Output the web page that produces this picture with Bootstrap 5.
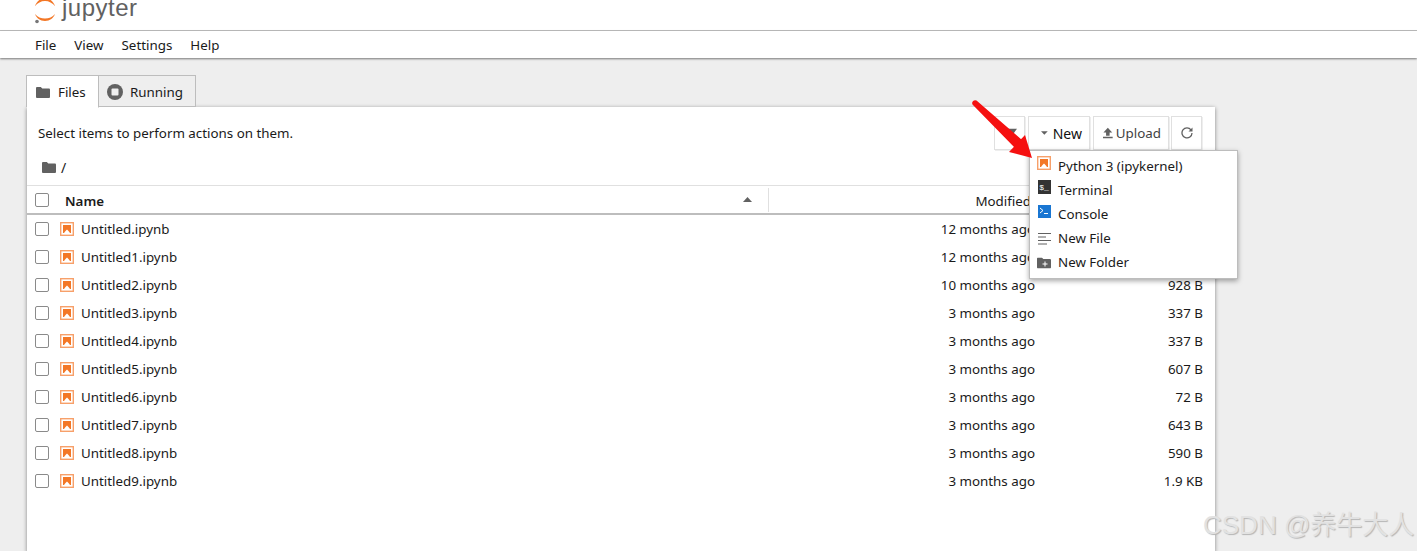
<!DOCTYPE html>
<html lang="en">
<head>
<meta charset="utf-8">
<title>Jupyter</title>
<link href="https://cdn.jsdelivr.net/npm/bootstrap@5.3.0/dist/css/bootstrap.min.css" rel="stylesheet">
<style>
html,body{height:551px;overflow:hidden}
body{background:#eee;font-family:"Noto Sans","Open Sans",sans-serif;font-size:13.35px;color:#1a1a1a;position:relative}
.top-bar{height:31px;background:#fff;border-bottom:1px solid #bdbdbd;overflow:hidden;padding-left:33px}
.top-bar svg{display:block;flex:none}
.logo-word{font-size:24px;color:#616161;line-height:24px;font-family:"Liberation Sans",sans-serif;letter-spacing:.5px;margin:-4px 0 0 5px}
.menu-bar{height:27px;background:#fff;box-shadow:0 1px 2px rgba(0,0,0,.5);padding-left:35px;gap:18px;position:relative;padding-top:2px}
.work{padding:17px 0 0 26px;width:1190px}
.tabs-row{height:32px}
.tab-item{height:32px;border:1px solid #bdbdbd;background:#eee;padding:0 12px 0 8px;gap:7px;margin-right:-1px;padding-top:2px}
.tab-item.active-tab{background:#fff;border-bottom-color:#fff;position:relative;z-index:2;height:33px;width:73px;padding-left:9px;gap:8px}
.panel{background:#fff;height:445px;margin-left:1px;width:1188px;box-shadow:0 1px 4px rgba(0,0,0,.45)}
.tool-row{height:46px;padding:9px 13px 0 11px}
.tool-btn{height:34px;border:1px solid #e0e0e0;box-shadow:1px 1px 0 #eee;background:#fff;padding:0 7px;font-size:14px;color:#424242}
.crumb-row{height:28px;padding-left:15px;gap:5px;margin-bottom:4px;font-size:14px}
.head-row{height:30px;border-top:1px solid #e0e0e0;border-bottom:2px solid #bdbdbd;padding-left:8px}
.head-name{font-weight:600;margin-left:16px;width:703px;padding-top:3px}
.cell-sep{border-left:1px solid #e0e0e0;height:24px}
.file-row{height:28px;padding-left:8px}
.chk{width:14px;height:14px;border:1px solid #8a8a8a;border-radius:2px;background:#fff;flex:none}
.file-ico{margin-left:11px;margin-right:7px;flex:none}
.file-name{width:300px;flex:none}
.col-head-mod{width:262px;text-align:right;flex:none;padding-top:3px}
.file-mod-wrap{width:654px;text-align:right;flex:none}
.file-size{width:168px;text-align:right;flex:none}
.new-menu{position:absolute;left:1029px;top:150px;width:209px;height:129px;background:#fff;border:1px solid #bdbdbd;box-shadow:0 2px 5px rgba(0,0,0,.35);padding-top:3px;z-index:5}
.new-item{height:24px;padding-left:8px}
.new-item svg{flex:none}
.new-item span{margin-left:7px}
.red-arrow{position:absolute;left:968px;top:98px;z-index:6}
.mark-text{position:absolute;left:1203px;top:507px;font-family:"Liberation Sans","Noto Sans CJK SC",sans-serif;font-size:26px;line-height:36px;color:#e2e2e2;text-shadow:1px 1px 1px #b5b5b5;white-space:nowrap;z-index:7}
</style>
</head>
<body>
<svg width="0" height="0" class="d-block position-absolute">
  <symbol id="nb" viewBox="0 0 14 14"><rect x=".7" y=".7" width="12.600" height="12.600" fill="#fff" stroke="#f7a06a" stroke-width="1.400"/><path d="M3 3h8v8h-1L8.500 9 7 7.500 5.500 9 4 11H3z" fill="#f37726"/></symbol>
  <symbol id="fold" viewBox="0 0 14 11"><path d="M0 1.200C0 .5.500 0 1.200 0h3.600l1.500 1.500h6.500c.7 0 1.200.5 1.200 1.200v7c0 .7-.5 1.300-1.200 1.300H1.200C.5 11 0 10.400 0 9.700z" fill="#616161"/></symbol>
</svg>
<div class="top-bar d-flex align-items-start">
  <svg width="24" height="30" viewBox="33 0 24 30"><path d="M35 6C36.500 2 40-2 45-2s8.500 4 10 8C52.500 3 49 1 45 1S37.500 3 35 6z" fill="#f37726"/><path d="M35 14c2.500 3 6 4.500 10 4.500s7.500-1.500 10-4.500c-1.500 4-5 7-10 7s-8.500-3-10-7z" fill="#f37726"/><circle cx="37" cy="21.500" r="1.800" fill="#767677"/></svg>
  <span class="logo-word">jupyter</span>
</div>
<div class="menu-bar d-flex align-items-center"><span>File</span><span>View</span><span>Settings</span><span>Help</span></div>
<div class="work">
  <div class="tabs-row d-flex align-items-start">
    <div class="tab-item active-tab d-flex align-items-center">
      <svg width="14" height="11"><use href="#fold"/></svg>
      <span>Files</span>
    </div>
    <div class="tab-item d-flex align-items-center">
      <svg width="16" height="16" viewBox="0 0 16 16"><circle cx="8" cy="8" r="8" fill="#616161"/><rect x="4.500" y="4.500" width="7" height="7" rx="1" fill="#eee"/></svg>
      <span>Running</span>
    </div>
  </div>
  <div class="panel">
    <div class="tool-row d-flex align-items-start">
      <span class="me-auto" style="margin-top:7px">Select items to perform actions on them.</span>
      <div class="tool-btn d-flex align-items-center" style="width:31px;margin-right:3px"><svg width="16" height="11" viewBox="0 0 16 11" style="margin-left:1px"><path d="M0 0h16l-8 11z" fill="#616161"/></svg></div>
      <div class="tool-btn d-flex align-items-center" style="width:62px;margin-right:3px;padding-left:12px;color:#111"><svg width="8" height="4" viewBox="0 0 8 4"><path d="M0 0h8L4 4z" fill="#616161"/></svg><span style="margin-left:5px">New</span></div>
      <div class="tool-btn d-flex align-items-center" style="width:76px;margin-right:2px;padding-left:9px"><svg width="11" height="12" viewBox="0 0 11 12"><path d="M5.500 0L10.500 5.500H7.500V9h-4V5.500H.5zM0 10.300h11V12H0z" fill="#616161"/></svg><span style="margin-left:3px;font-size:13.4px">Upload</span></div>
      <div class="tool-btn d-flex align-items-center justify-content-center" style="width:31px"><svg width="12" height="12" viewBox="0 0 12 12"><path d="M10 2.900A5 5 0 1 0 11 6" fill="none" stroke="#616161" stroke-width="1.300"/><path d="M11.500 .6v4h-4z" fill="#616161"/></svg></div>
    </div>
    <div class="crumb-row d-flex align-items-center">
      <svg width="14" height="11"><use href="#fold"/></svg><span>/</span>
    </div>
    <div class="head-row d-flex align-items-center">
      <span class="chk"></span>
      <span class="head-name d-flex align-items-center justify-content-between">Name<svg width="9" height="5" viewBox="0 0 9 5" style="margin-right:16px;margin-top:-3px"><path d="M0 5h9L4.500 0z" fill="#616161"/></svg></span>
      <span class="cell-sep"></span>
      <span class="col-head-mod">Modified</span>
    </div>
    <div class="file-row d-flex align-items-center"><span class="chk"></span><svg class="file-ico" width="14" height="14"><use href="#nb"/></svg><span class="file-name">Untitled.ipynb</span><span class="file-mod-wrap">12 months ago</span><span class="file-size">&nbsp;</span></div>
    <div class="file-row d-flex align-items-center"><span class="chk"></span><svg class="file-ico" width="14" height="14"><use href="#nb"/></svg><span class="file-name">Untitled1.ipynb</span><span class="file-mod-wrap">12 months ago</span><span class="file-size">&nbsp;</span></div>
    <div class="file-row d-flex align-items-center"><span class="chk"></span><svg class="file-ico" width="14" height="14"><use href="#nb"/></svg><span class="file-name">Untitled2.ipynb</span><span class="file-mod-wrap">10 months ago</span><span class="file-size">928 B</span></div>
    <div class="file-row d-flex align-items-center"><span class="chk"></span><svg class="file-ico" width="14" height="14"><use href="#nb"/></svg><span class="file-name">Untitled3.ipynb</span><span class="file-mod-wrap">3 months ago</span><span class="file-size">337 B</span></div>
    <div class="file-row d-flex align-items-center"><span class="chk"></span><svg class="file-ico" width="14" height="14"><use href="#nb"/></svg><span class="file-name">Untitled4.ipynb</span><span class="file-mod-wrap">3 months ago</span><span class="file-size">337 B</span></div>
    <div class="file-row d-flex align-items-center"><span class="chk"></span><svg class="file-ico" width="14" height="14"><use href="#nb"/></svg><span class="file-name">Untitled5.ipynb</span><span class="file-mod-wrap">3 months ago</span><span class="file-size">607 B</span></div>
    <div class="file-row d-flex align-items-center"><span class="chk"></span><svg class="file-ico" width="14" height="14"><use href="#nb"/></svg><span class="file-name">Untitled6.ipynb</span><span class="file-mod-wrap">3 months ago</span><span class="file-size">72 B</span></div>
    <div class="file-row d-flex align-items-center"><span class="chk"></span><svg class="file-ico" width="14" height="14"><use href="#nb"/></svg><span class="file-name">Untitled7.ipynb</span><span class="file-mod-wrap">3 months ago</span><span class="file-size">643 B</span></div>
    <div class="file-row d-flex align-items-center"><span class="chk"></span><svg class="file-ico" width="14" height="14"><use href="#nb"/></svg><span class="file-name">Untitled8.ipynb</span><span class="file-mod-wrap">3 months ago</span><span class="file-size">590 B</span></div>
    <div class="file-row d-flex align-items-center"><span class="chk"></span><svg class="file-ico" width="14" height="14"><use href="#nb"/></svg><span class="file-name">Untitled9.ipynb</span><span class="file-mod-wrap">3 months ago</span><span class="file-size">1.9 KB</span></div>
  </div>
</div>
<div class="new-menu">
  <div class="new-item d-flex align-items-center"><svg width="14" height="14" style="margin:-7px 0 0 -1px"><use href="#nb"/></svg><span>Python 3 (ipykernel)</span></div>
  <div class="new-item d-flex align-items-center"><svg width="13" height="14" viewBox="0 0 13 14" style="margin-top:-6px"><rect width="13" height="14" fill="#333"/><text x="1.200" y="9.500" font-size="8" font-family="Liberation Mono" fill="#fff">$_</text></svg><span>Terminal</span></div>
  <div class="new-item d-flex align-items-center"><svg width="13" height="13" viewBox="0 0 13 13" style="margin-top:-6px"><rect width="13" height="13" fill="#1976d2"/><path d="M2 3l3 2.500L2 8" fill="none" stroke="#fff"/><path d="M6 8.500h4" stroke="#fff"/></svg><span>Console</span></div>
  <div class="new-item d-flex align-items-center"><svg width="13" height="12" viewBox="0 0 13 12" style="margin-top:2px"><path d="M0 .5h13M0 4h8M0 7.500h13M0 11h9" stroke="#616161"/></svg><span>New File</span></div>
  <div class="new-item d-flex align-items-center"><svg width="14" height="12" viewBox="0 0 14 11" style="margin:2px 0 0 -1px"><use href="#fold"/><path d="M8 4v5M5.500 6.500h5" stroke="#fff"/></svg><span>New Folder</span></div>
</div>
<svg class="red-arrow" width="70" height="64" viewBox="0 0 70 64"><path d="M4.500 6.500a3 3 0 0 1 4-4L54 42 47 50z" fill="#f51010"/><path d="M64 60L41 54 57 37z" fill="#f51010"/></svg>
<div class="mark-text">CSDN @养牛大人</div>
</body>
</html>
